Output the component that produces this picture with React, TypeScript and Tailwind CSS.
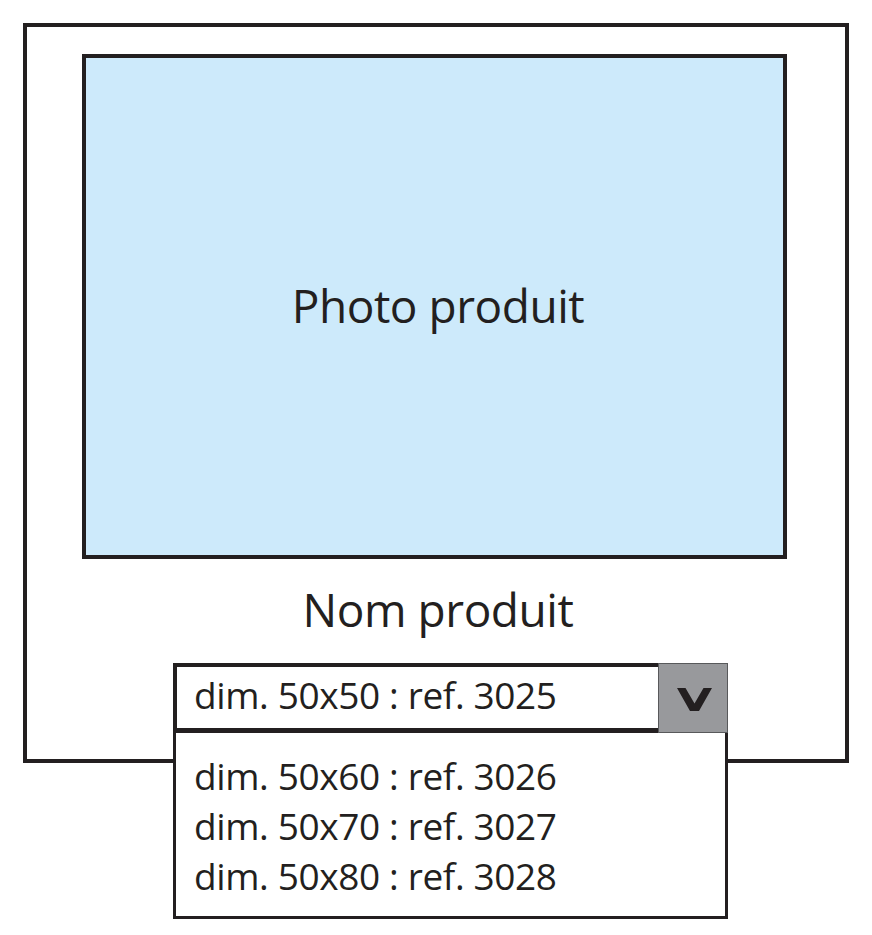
const options = [
  'dim. 50x60 : ref. 3026',
  'dim. 50x70 : ref. 3027',
  'dim. 50x80 : ref. 3028',
]

function ChevronV() {
  return (
    <svg width="35" height="23" viewBox="0 0 35 23" className="mt-[3px] ml-[3px]">
      <polygon points="0,0 8.5,0 17.5,15.5 26.5,0 35,0 22,23 13,23" fill="#231f20" />
    </svg>
  )
}

export default function App() {
  return (
    <div className="h-[935px] w-[872px] bg-white p-[23px] font-['Open_Sans',sans-serif] text-[#231f20]">
      <div className="h-[740px] w-[826px] border-4 border-[#231f20]">
        <div className="ml-[55px] mt-[27px] flex h-[505px] w-[705px] items-center justify-center border-4 border-[#231f20] bg-[#cdeafb] pb-[4px] pl-[7px]">
          <span className="text-[46px] leading-[60px] tracking-[-0.01em]">Photo produit</span>
        </div>

        <div className="mt-[20px] pl-[4px] text-center text-[46px] leading-[60px] tracking-[-0.01em]">Nom produit</div>

        <div className="relative z-10 ml-[146px] mt-[24px] w-[555px]">
          <div className="flex h-[70px]">
            <div className="flex-1 border-y-4 border-l-4 border-b-[5px] border-[#231f20] bg-white pl-[17px]">
              <span className="text-[37px] leading-[55px] tracking-[-0.01em]">dim. 50x50 : ref. 3025</span>
            </div>
            <button
              type="button"
              className="flex w-[70px] items-center justify-center border border-[#58595b] bg-[#98999c]"
            >
              <ChevronV />
            </button>
          </div>

          <ul className="absolute left-0 top-full w-full border-x-[3px] border-b-[3px] border-[#231f20] bg-white pb-[15px] pl-[18px] pt-[18px]">
            {options.map((option) => (
              <li key={option} className="text-[37px] leading-[50px] tracking-[-0.01em]">
                {option}
              </li>
            ))}
          </ul>
        </div>
      </div>
    </div>
  )
}
